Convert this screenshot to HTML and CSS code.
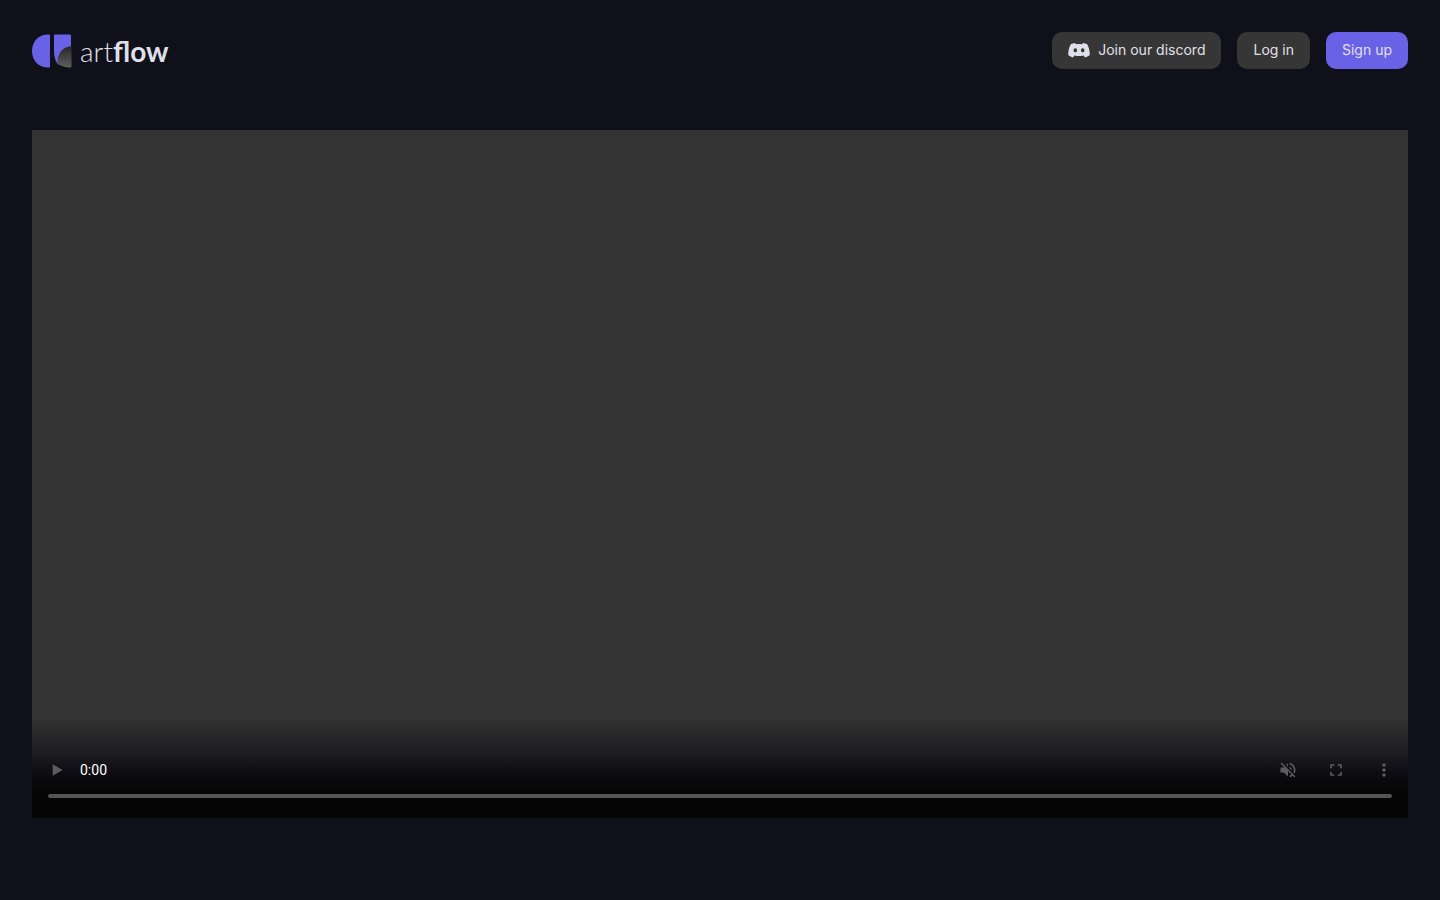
FILE: index.html
```
<!DOCTYPE html>
<html lang="en">
    <head>
        <meta charset="UTF-8" />
        <meta name="viewport" content="width=device-width, initial-scale=1.0" />
        <title>artflow</title>
        <link rel="stylesheet" href="styles.css">
    </head>
    <body>
        <header class="header">
            <a href="#" class="logo">
                <svg class="logo-mark" viewBox="0 0 40 34" aria-hidden="true">
                    <defs>
                        <linearGradient id="leaf" x1="0" y1="0" x2="0" y2="1">
                            <stop offset="0" stop-color="#242424" />
                            <stop offset="1" stop-color="#606060" />
                        </linearGradient>
                    </defs>
                    <path fill="#6962e6" d="M15 .5h2a1 1 0 0 1 1 1v31a1 1 0 0 1-1 1h-2C6 33 0 26 0 17S6 1 15 .5z" />
                    <path fill="#6962e6" d="M23 .5h15a1 1 0 0 1 1 1V13L27 31C23 28 22 22 22 16V1.500a1 1 0 0 1 1-1z" />
                    <path fill="url(#leaf)" d="M39.500 12v20.500a1 1 0 0 1-1 1c-5 0-9.500-1-13-4.500C25 20 30 13 39.500 12z" />
                </svg>
                <span class="logo-text">art<strong>flow</strong></span>
            </a>
            <nav class="nav">
                <a href="#" class="btn">
                    <svg class="discord" viewBox="0 0 22 16" aria-hidden="true">
                        <path fill="#e0e0ea" fill-rule="evenodd" d="M7 1 3 2C1 5 .2 9 .2 13c1.500 1.300 3 2 4.800 2.400l1.400-2c3 .7 6.200.7 9.200 0l1.400 2c1.800-.4 3.300-1.100 4.800-2.400 0-4-.8-8-2.800-11l-4-1-1 1.300a16 16 0 0 0-6 0zM7.300 6.200a1.800 2.100 0 1 1 0 4.200 1.800 2.100 0 0 1 0-4.200zm7.400 0a1.800 2.100 0 1 1 0 4.200 1.800 2.100 0 0 1 0-4.200z" />
                    </svg>
                    Join our discord
                </a>
                <a href="#" class="btn">Log in</a>
                <a href="#" class="btn btn-primary">Sign up</a>
            </nav>
        </header>
        <main class="main">
            <div class="player">
                <div class="controls">
                    <div class="controls-row">
                        <button class="control" aria-label="Play" disabled>
                            <svg viewBox="0 0 24 24"><path d="M8 5v14l12-7z" /></svg>
                        </button>
                        <span class="time">0:00</span>
                        <button class="control" aria-label="Unmute" disabled>
                            <svg viewBox="0 0 24 24"><path d="M16.500 12c0-1.770-1.020-3.290-2.500-4.030v2.210l2.450 2.450c.03-.2.050-.41.050-.63zm2.500 0c0 .94-.2 1.820-.54 2.640l1.510 1.510C20.630 14.910 21 13.500 21 12c0-4.280-2.990-7.860-7-8.770v2.060c2.890.86 5 3.540 5 6.710zM4.270 3 3 4.270 7.730 9H3v6h4l5 5v-6.730l4.250 4.250c-.67.52-1.420.93-2.250 1.180v2.060c1.380-.31 2.630-.95 3.690-1.810L19.730 21 21 19.730l-9-9L4.270 3zM12 4 9.910 6.090 12 8.180V4z" /></svg>
                        </button>
                        <button class="control" aria-label="Full screen" disabled>
                            <svg viewBox="0 0 24 24"><path d="M7 14H5v5h5v-2H7v-3zm-2-4h2V7h3V5H5v5zm12 7h-3v2h5v-5h-2v3zM14 5v2h3v3h2V5h-5z" /></svg>
                        </button>
                        <button class="control" aria-label="More options" disabled>
                            <svg viewBox="0 0 24 24"><path d="M12 8c1.100 0 2-.9 2-2s-.9-2-2-2-2 .9-2 2 .9 2 2 2zm0 2c-1.100 0-2 .9-2 2s.9 2 2 2 2-.9 2-2-.9-2-2-2zm0 6c-1.100 0-2 .9-2 2s.9 2 2 2 2-.9 2-2-.9-2-2-2z" /></svg>
                        </button>
                    </div>
                    <div class="timeline"></div>
                </div>
            </div>
        </main>
    </body>
</html>
```
FILE: styles.css
```
* {
    box-sizing: border-box;
}

body {
    margin: 0;
    min-height: 100vh;
    background: #10101a;
    color: #e0e0ea;
    font-family: Lato, "Liberation Sans", sans-serif;
}

.header {
    display: flex;
    justify-content: space-between;
    align-items: center;
    padding: 32px 32px 0;
}

.logo {
    display: flex;
    align-items: center;
    gap: 8px;
    color: inherit;
    text-decoration: none;
}

.logo-mark {
    width: 40px;
    height: 34px;
}

.logo-text {
    font-size: 28px;
    line-height: 36px;
    font-weight: 300;
}

.logo-text strong {
    font-weight: 700;
}

.nav {
    display: flex;
    gap: 16px;
}

.btn {
    display: flex;
    align-items: center;
    gap: 8px;
    padding: 8px 16px 9px;
    border-radius: 10px;
    background: #363636;
    color: inherit;
    font-family: Inter, "Liberation Sans", sans-serif;
    font-size: 14px;
    line-height: 20px;
    text-decoration: none;
}

.btn-primary {
    background: #6962e6;
}

.discord {
    width: 22px;
    height: 16px;
}

.main {
    padding: 61px 32px 78px;
}

.player {
    display: flex;
    flex-direction: column;
    justify-content: flex-end;
    aspect-ratio: 2 / 1;
    background: #333;
}

.controls {
    padding: 28px 0 20px;
    background: linear-gradient(transparent, rgba(8, 8, 14, 0.5) 35%, rgba(8, 8, 14, 0.9) 55%, #050505 75%);
}

.controls-row {
    display: flex;
    align-items: center;
}

.control {
    display: flex;
    justify-content: center;
    width: 48px;
    padding: 14px 0;
    border: 0;
    background: none;
}

.control svg {
    width: 20px;
    height: 20px;
    fill: #5c5c5c;
}

.time {
    flex: 1;
    color: #fff;
    font-family: Roboto, "Liberation Sans", sans-serif;
    font-size: 14px;
}

.timeline {
    height: 4px;
    margin: 0 16px;
    border-radius: 2px;
    background: #555;
}
```
